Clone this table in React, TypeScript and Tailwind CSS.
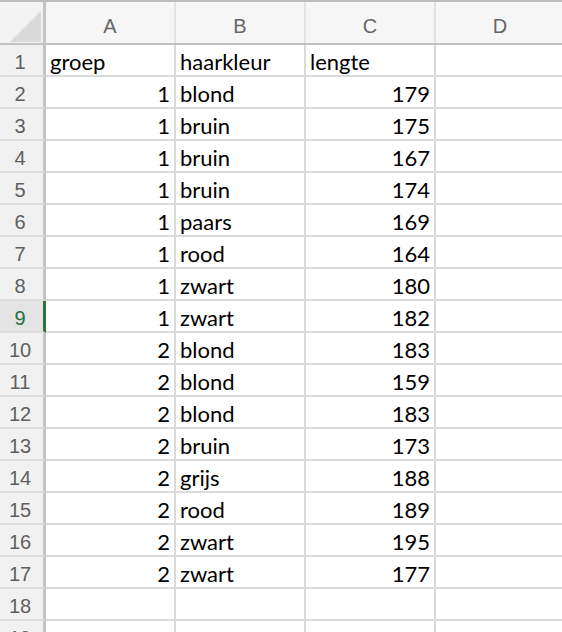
import React from 'react';

type Row = [number | null, string, number | null];

const rows: Row[] = [
  [1, 'blond', 179],
  [1, 'bruin', 175],
  [1, 'bruin', 167],
  [1, 'bruin', 174],
  [1, 'paars', 169],
  [1, 'rood', 164],
  [1, 'zwart', 180],
  [1, 'zwart', 182],
  [2, 'blond', 183],
  [2, 'blond', 159],
  [2, 'blond', 183],
  [2, 'bruin', 173],
  [2, 'grijs', 188],
  [2, 'rood', 189],
  [2, 'zwart', 195],
  [2, 'zwart', 177],
];

const cell = 'h-[32px] w-[130px] shrink-0 border-r-2 border-b-2 border-[#dadada] px-[4px] pt-[3px] flex items-center overflow-hidden whitespace-nowrap';
const headFont = "font-['Liberation_Sans',Arial,sans-serif]";
const cellFont = "font-['Lato','Open_Sans',sans-serif] text-[22px] text-black";

function RowHead({ n, selected }: { n: number; selected?: boolean }) {
  return (
    <div
      className={`h-[32px] w-[46px] shrink-0 border-b-2 border-[#dcdcdc] border-r-[3px] pt-[3px] flex items-center justify-center text-[20px] ${headFont} ${
        selected ? 'bg-[#e4e4e4] text-[#2a6e3f] border-r-[#2f7343]' : 'bg-[#f1f1f1] text-[#5f5f5f] border-r-[#c4c4c4]'
      }`}
    >
      <span className="pr-[3px]">{n}</span>
    </div>
  );
}

export default function App() {
  return (
    <div className="h-[632px] w-[562px] overflow-hidden bg-white">
      {/* column headers */}
      <div className="flex h-[45px] border-t-2 border-b-2 border-t-[#bdbdbd] border-b-[#c2c2c2] bg-[#f6f6f6]">
        <div className="relative w-[46px] shrink-0 border-r-[3px] border-[#c4c4c4] bg-[#f3f3f3]">
          <svg className="absolute left-[10px] top-[9px]" width="31" height="31" viewBox="0 0 31 31">
            <polygon points="0,31 31,0 31,31" fill="#dadada" />
          </svg>
        </div>
        {['A', 'B', 'C', 'D'].map((c) => (
          <div
            key={c}
            className={`w-[130px] shrink-0 border-r-2 border-[#e2e2e2] pt-[6px] flex items-center justify-center text-[20px] text-[#666666] ${headFont}`}
          >
            {c}
          </div>
        ))}
      </div>

      {/* row 1: titles */}
      <div className="flex">
        <RowHead n={1} />
        <div className={`${cell} ${cellFont}`}>groep</div>
        <div className={`${cell} ${cellFont}`}>haarkleur</div>
        <div className={`${cell} ${cellFont}`}>lengte</div>
        <div className={cell} />
      </div>

      {rows.map((r, i) => (
        <div key={i} className="flex">
          <RowHead n={i + 2} selected={i + 2 === 9} />
          <div className={`${cell} ${cellFont} justify-end`}>{r[0]}</div>
          <div className={`${cell} ${cellFont}`}>{r[1]}</div>
          <div className={`${cell} ${cellFont} justify-end`}>{r[2]}</div>
          <div className={cell} />
        </div>
      ))}

      {[18, 19].map((n) => (
        <div key={n} className="flex">
          <RowHead n={n} />
          <div className={cell} />
          <div className={cell} />
          <div className={cell} />
          <div className={cell} />
        </div>
      ))}
    </div>
  );
}
